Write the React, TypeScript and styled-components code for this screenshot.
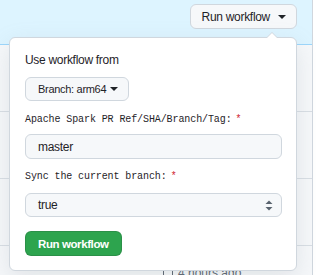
import styled, { createGlobalStyle } from "styled-components";

const GlobalStyle = createGlobalStyle`
    body {
        margin: 0;
        background: #ffffff;
        font-family: "Liberation Sans", Arial, sans-serif;
        color: #1f2328;
    }
`;

const Page = styled.div`
    position: relative;
    width: 316px;
    height: 275px;
    overflow: hidden;
`;

const RunsBox = styled.div`
    width: 313px;
    border-right: 1px solid #d0d7de;
    box-sizing: border-box;
`;

const Header = styled.div`
    display: flex;
    justify-content: flex-end;
    align-items: flex-start;
    height: 45px;
    box-sizing: border-box;
    padding: 4px 15px 0 0;
    background: #ddf4ff;
    border-bottom: 1px solid #9cd6fb;
`;

const RunRow = styled.div`
    display: grid;
    grid-template-columns: 1fr 140px;
    height: 67px;
    box-sizing: border-box;
    padding: 0 10px;
    background: #f6f8fa;
    border-bottom: 1px solid #d8dee4;
`;

const Meta = styled.div`
    display: flex;
    align-items: flex-start;
    gap: 4px;
    padding-top: 18px;
    font-size: 12px;
    line-height: 18px;
    color: #59636e;
`;

const Caret = styled.span<{ $size?: number }>`
    display: inline-block;
    width: 0;
    height: 0;
    border-top: ${(p) => p.$size ?? 4}px solid currentColor;
    border-left: ${(p) => p.$size ?? 4}px solid transparent;
    border-right: ${(p) => p.$size ?? 4}px solid transparent;
`;

const HeaderButton = styled.button`
    display: flex;
    align-items: center;
    gap: 8px;
    height: 25px;
    padding: 0 10px 0 11px;
    border: 1px solid #d0d7de;
    border-radius: 6px;
    background: #f6f8fa;
    color: #1f2328;
    font-family: inherit;
    font-size: 12px;
    letter-spacing: -0.3px;
    box-sizing: border-box;
`;

const Popover = styled.div`
    position: absolute;
    top: 37px;
    left: 9px;
    width: 288px;
    box-sizing: border-box;
    padding: 13px 14px 14px 15px;
    background: #ffffff;
    border: 1px solid #d0d7de;
    border-radius: 6px;
    box-shadow: 0 8px 24px rgba(140, 149, 159, 0.2);

    &::before,
    &::after {
        content: "";
        position: absolute;
        left: 256px;
        border: 6px solid transparent;
    }

    &::before {
        top: -12px;
        border-bottom-color: #d0d7de;
    }

    &::after {
        top: -11px;
        border-bottom-color: #ffffff;
    }
`;

const Title = styled.div`
    font-size: 12px;
    line-height: 18px;
    letter-spacing: -0.3px;
`;

const BranchButton = styled.button`
    display: flex;
    align-items: center;
    gap: 4px;
    height: 24px;
    margin-top: 8px;
    padding: 0 10px 0 12px;
    border: 1px solid #d0d7de;
    border-radius: 6px;
    background: #f6f8fa;
    color: #1f2328;
    font-family: inherit;
    font-size: 11px;
    letter-spacing: -0.3px;
    box-sizing: border-box;
`;

const FieldLabel = styled.div<{ $gap: number }>`
    margin-top: ${(p) => p.$gap}px;
    font-family: "Liberation Mono", "Courier New", monospace;
    font-size: 10px;
    letter-spacing: -0.1px;
    line-height: 18px;
    color: #1f2328;
`;

const Required = styled.span`
    font-family: "Liberation Sans", Arial, sans-serif;
    color: #cf222e;
    margin-left: 5px;
`;

const TextInput = styled.div`
    display: flex;
    align-items: center;
    height: 25px;
    margin-top: 5px;
    padding: 0 12px;
    border: 1px solid #d0d7de;
    border-radius: 6px;
    background: #f6f8fa;
    font-size: 12px;
    letter-spacing: -0.3px;
    color: #1f2328;
    box-sizing: border-box;
`;

const SelectBox = styled(TextInput)`
    justify-content: space-between;
    height: 24px;
    margin-top: 7px;
    padding-right: 8px;
`;

const RunButton = styled.button`
    height: 25px;
    margin-top: 14px;
    padding: 0 12px;
    border: 1px solid rgba(31, 35, 40, 0.15);
    border-radius: 6px;
    background: #2da44e;
    color: #ffffff;
    font-family: inherit;
    font-size: 11.5px;
    font-weight: 700;
    letter-spacing: -0.4px;
    box-sizing: border-box;
`;

const SelectArrows = () => (
    <svg width="8" height="11" viewBox="0 0 8 11">
        <path d="M4 0.5 L7.5 4 H0.5 Z" fill="#59636e" />
        <path d="M4 10.5 L7.5 7 H0.5 Z" fill="#59636e" />
    </svg>
);

const CalendarIcon = () => (
    <svg width="12" height="14" viewBox="0 0 12 14" style={{ marginTop: 3 }}>
        <path d="M1.5 1 V13 M10.5 1 V13" stroke="#59636e" fill="none" />
    </svg>
);

const App: React.FC = () => {
    return (
        <Page>
            <GlobalStyle />
            <RunsBox>
                <Header>
                    <HeaderButton>
                        Run workflow
                        <Caret />
                    </HeaderButton>
                </Header>
                <RunRow />
                <RunRow />
                <RunRow />
                <RunRow>
                    <div />
                    <Meta>
                        <CalendarIcon />
                        4 hours ago
                    </Meta>
                </RunRow>
            </RunsBox>

            <Popover>
                <Title>Use workflow from</Title>
                <BranchButton>
                    Branch: arm64
                    <Caret />
                </BranchButton>

                <FieldLabel $gap={9}>
                    Apache Spark PR Ref/SHA/Branch/Tag:<Required>*</Required>
                </FieldLabel>
                <TextInput>master</TextInput>

                <FieldLabel $gap={8}>
                    Sync the current branch:<Required>*</Required>
                </FieldLabel>
                <SelectBox>
                    true
                    <SelectArrows />
                </SelectBox>

                <RunButton>Run workflow</RunButton>
            </Popover>
        </Page>
    );
};

export default App;
